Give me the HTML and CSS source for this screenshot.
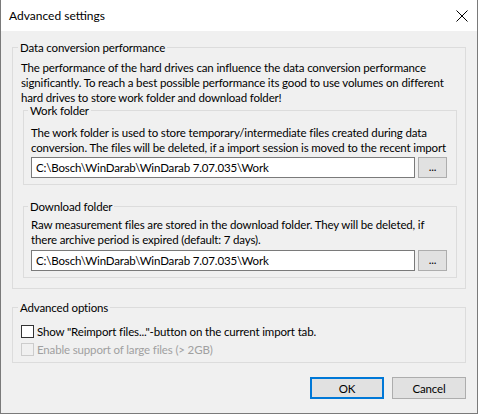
FILE: index.html
```html
<!DOCTYPE html>
<html>
<head>
<meta charset="utf-8">
<link rel="stylesheet" href="styles.css">
</head>
<body>
<div class="window">
  <div class="titlebar">
    <span class="title">Advanced settings</span>
    <span class="close"><svg width="12" height="12" viewBox="0 0 12 12"><path d="M0.5 0.5L11.5 11.5M11.5 0.5L0.5 11.5" stroke="#000" stroke-width="1" fill="none"/></svg></span>
  </div>
  <div class="content">
    <fieldset class="group outer">
      <legend>Data conversion performance</legend>
      <p class="desc">The performance of the hard drives can influence the data conversion performance<br>significantly. To reach a best possible performance its good to use volumes on different<br>hard drives to store work folder and download folder!</p>
      <fieldset class="group inner work">
        <legend>Work folder</legend>
        <p class="desc">The work folder is used to store temporary/intermediate files created during data<br>conversion. The files will be deleted, if a import session is moved to the recent import</p>
        <div class="pathrow">
          <div class="field">C:\Bosch\WinDarab\WinDarab 7.07.035\Work</div>
          <div class="browse">...</div>
        </div>
      </fieldset>
      <fieldset class="group inner download">
        <legend>Download folder</legend>
        <p class="desc">Raw measurement files are stored in the download folder. They will be deleted, if<br>there archive period is expired (default: 7 days).</p>
        <div class="pathrow">
          <div class="field">C:\Bosch\WinDarab\WinDarab 7.07.035\Work</div>
          <div class="browse">...</div>
        </div>
      </fieldset>
    </fieldset>
    <fieldset class="group options">
      <legend>Advanced options</legend>
      <div class="check"><span class="box"></span><span>Show "Reimport files..."-button on the current import tab.</span></div>
      <div class="check disabled"><span class="box"></span><span>Enable support of large files (&gt; 2GB)</span></div>
    </fieldset>
    <div class="buttons">
      <div class="btn default">OK</div>
      <div class="btn">Cancel</div>
    </div>
  </div>
</div>
</body>
</html>
```
FILE: styles.css
```css
* { box-sizing: border-box; }
html, body { margin: 0; padding: 0; background: #f0f0f0; }
body {
  font-family: "Segoe UI", Lato, "Liberation Sans", sans-serif;
  font-size: 11.5px;
  letter-spacing: -0.15px;
  line-height: 15px;
  color: #000;
}
.window {
  width: 478px;
  height: 414px;
  border: 1px solid #7a7a7a;
  border-top: none;
  background: #f0f0f0;
  display: flex;
  flex-direction: column;
}
.titlebar {
  height: 31px;
  background: #fff;
  display: flex;
  align-items: center;
  justify-content: space-between;
  padding: 0 9px 0 8px;
}
.title { font-size: 12px; letter-spacing: 0; }
.close { display: flex; }
.content {
  padding: 9px 11px 0 11px;
  display: flex;
  flex-direction: column;
}
.group {
  margin: 0;
  border: 1px solid #dcdcdc;
  min-width: 0;
}
.group legend {
  padding: 0 2px;
  margin-left: -3px;
  line-height: 15px;
}
.outer { padding: 5px 8px 10px 8px; }
.desc { margin: 0; white-space: nowrap; }
.inner { margin: 0 0 0 2px; padding: 4px 9px 6px 7px; }
.work { margin-top: -2px; padding-top: 7px; }
.download { margin-top: 14px; padding-top: 3px; }
.pathrow {
  display: flex;
  gap: 3px;
  margin-top: 2px;
  height: 21px;
}
.download .pathrow { margin-top: 3px; }
.field {
  flex: 1;
  background: #fff;
  border: 1px solid #7a7a7a;
  padding: 2px 4px;
  line-height: 15px;
}
.browse {
  width: 29px;
  background: #e1e1e1;
  border: 1px solid #adadad;
  text-align: center;
  line-height: 17px;
}
.options { margin-top: 11px; padding: 7px 8px 4px 8px; }
.check {
  display: flex;
  align-items: center;
  gap: 3px;
  height: 18px;
}
.box {
  width: 13px;
  height: 13px;
  border: 1px solid #333;
  background: #fff;
}
.disabled { color: #a0a0a0; }
.disabled .box { border-color: #cccccc; background: #f0f0f0; }
.buttons {
  display: flex;
  justify-content: flex-end;
  gap: 8px;
  margin-top: 14px;
}
.btn {
  width: 74px;
  height: 22px;
  background: #e1e1e1;
  border: 1px solid #adadad;
  display: flex;
  align-items: center;
  justify-content: center;
}
.btn.default {
  border-color: #0078d7;
  box-shadow: inset 0 0 0 1px #0078d7;
}
```
